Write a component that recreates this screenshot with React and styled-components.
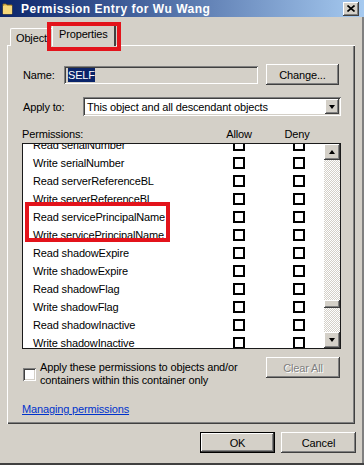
import React from "react";
import styled, { createGlobalStyle } from "styled-components";

const GlobalStyle = createGlobalStyle`
  body {
    margin: 0;
    background: #d4d0c8;
    font-family: "Liberation Sans", Arial, sans-serif;
    font-size: 11px;
    letter-spacing: -0.15px;
    color: #000;
  }
`;

const raised = `
  box-shadow: inset -1px -1px #404040, inset 1px 1px #ffffff,
    inset -2px -2px #808080, inset 2px 2px #d4d0c8;
`;

const sunken = `
  box-shadow: inset 1px 1px #808080, inset -1px -1px #ffffff,
    inset 2px 2px #404040, inset -2px -2px #d4d0c8;
`;

const Window = styled.div`
  width: 364px;
  height: 465px;
  box-sizing: border-box;
  background: #d4d0c8;
  display: flex;
  flex-direction: column;
  border-bottom: 2px solid #404040;
  box-shadow: inset -2px 0 #808080;
  overflow: hidden;
`;

const TitleBar = styled.div`
  height: 17px;
  flex: none;
  display: flex;
  align-items: center;
  padding: 0 5px 0 2px;
  background: linear-gradient(to right, #0a246a, #a6caf0);
`;

const Title = styled.span`
  flex: 1;
  margin-left: 8px;
  color: #fff;
  font-weight: bold;
  font-size: 12px;
  letter-spacing: 0.5px;
  white-space: nowrap;
`;

const CloseButton = styled.div`
  width: 16px;
  height: 14px;
  background: #d4d0c8;
  display: flex;
  align-items: center;
  justify-content: center;
  ${raised}
`;

const TabStrip = styled.div`
  display: flex;
  align-items: flex-end;
  height: 22px;
  margin: 7px 0 -1px 7px;
  padding-left: 3px;
  position: relative;
  z-index: 1;
`;

const Tab = styled.div`
  position: relative;
  box-sizing: border-box;
  height: ${(p) => (p.$active ? 22 : 18)}px;
  width: ${(p) => p.$width}px;
  margin-left: ${(p) => (p.$active ? -2 : 0)}px;
  padding: ${(p) => (p.$active ? "3px 0 0 6px" : "3px 0 0 5px")};
  background: #d4d0c8;
  border-top: 1px solid #fff;
  border-left: 1px solid #fff;
  border-right: 2px solid #404040;
  border-top-left-radius: 2px;
  border-top-right-radius: 2px;
  overflow: hidden;
  white-space: nowrap;
  z-index: ${(p) => (p.$active ? 2 : 1)};
`;

const TabHighlight = styled.div`
  position: absolute;
  left: 40px;
  top: -2px;
  width: 74px;
  height: 29px;
  box-sizing: border-box;
  border: 4px solid #e3131b;
  z-index: 3;
  pointer-events: none;
`;

const Panel = styled.div`
  margin-left: 7px;
  width: 348px;
  height: 379px;
  box-sizing: border-box;
  padding: 19px 0 0 15px;
  box-shadow: inset 1px 1px #ffffff, inset -1px -1px #404040,
    inset -2px -2px #808080;
`;

const FieldRow = styled.div`
  display: flex;
  align-items: center;
  height: ${(p) => p.$height}px;
  margin-top: ${(p) => p.$top || 0}px;
`;

const Label = styled.span`
  width: ${(p) => p.$width}px;
  flex: none;
  padding-left: 1px;
  box-sizing: border-box;
`;

const NameField = styled.div`
  width: 194px;
  height: 18px;
  box-sizing: border-box;
  padding: 3px 0 0 4px;
  background: #d4d0c8;
  ${sunken}
`;

const Selected = styled.span`
  background: #0a246a;
  color: #fff;
  padding: 1px 0;
`;

const Button = styled.div`
  width: ${(p) => p.$width}px;
  height: 21px;
  margin-left: ${(p) => p.$left || 0}px;
  margin-right: ${(p) => p.$right || 0}px;
  box-sizing: border-box;
  display: flex;
  align-items: center;
  justify-content: center;
  background: #d4d0c8;
  color: ${(p) => (p.$disabled ? "#808080" : "#000")};
  text-shadow: ${(p) => (p.$disabled ? "1px 1px #ffffff" : "none")};
  ${raised}
  ${(p) =>
    p.$default &&
    `box-shadow: inset 0 0 0 1px #000, inset -2px -2px #404040,
      inset 2px 2px #ffffff, inset -3px -3px #808080;`}
`;

const Combo = styled.div`
  width: 258px;
  height: 19px;
  box-sizing: border-box;
  padding: 2px 2px 2px 3px;
  display: flex;
  align-items: center;
  background: #fff;
  ${sunken}
`;

const ComboText = styled.span`
  flex: 1;
  padding-left: 1px;
`;

const ArrowButton = styled.div`
  width: ${(p) => p.$width || 16}px;
  height: ${(p) => p.$height || 16}px;
  flex: none;
  display: flex;
  align-items: center;
  justify-content: center;
  background: #d4d0c8;
  ${raised}
`;

const Arrow = styled.span`
  width: 0;
  height: 0;
  border-left: 3.5px solid transparent;
  border-right: 3.5px solid transparent;
  ${(p) =>
    p.$up ? "border-bottom: 4px solid #000;" : "border-top: 4px solid #000;"}
`;

const Header = styled.div`
  display: flex;
  height: 14px;
  margin-top: 11px;
  line-height: 14px;
`;

const HeaderCell = styled.span`
  width: ${(p) => p.$width}px;
  text-align: ${(p) => (p.$center ? "center" : "left")};
`;

const ListBox = styled.div`
  margin-top: 2px;
  width: 319px;
  height: 206px;
  box-sizing: border-box;
  border: 1px solid #1a1a1a;
  background: #fff;
  display: flex;
`;

const Rows = styled.div`
  flex: 1;
  overflow: hidden;
  position: relative;
`;

const RowsInner = styled.div`
  margin-top: -8px;
`;

const Group = styled.div`
  position: relative;
`;

const GroupHighlight = styled.div`
  position: absolute;
  left: 2px;
  top: -6px;
  width: 145px;
  height: 40px;
  box-sizing: border-box;
  border: 4px solid #e3131b;
  pointer-events: none;
`;

const Row = styled.div`
  display: flex;
  align-items: center;
  height: 18px;
  padding-left: 10px;
`;

const RowName = styled.span`
  width: 200px;
  flex: none;
  white-space: nowrap;
`;

const Box = styled.span`
  width: 12px;
  height: 12px;
  box-sizing: border-box;
  border: 2px solid #000;
  background: #fff;
  flex: none;
  margin-right: ${(p) => p.$gap || 0}px;
`;

const ScrollBar = styled.div`
  width: 16px;
  flex: none;
  display: flex;
  flex-direction: column;
`;

const Track = styled.div`
  flex: 1;
  background-color: #fff;
  background-image: conic-gradient(
    #d4d0c8 25%,
    transparent 0 50%,
    #d4d0c8 0 75%,
    transparent 0
  );
  background-size: 2px 2px;
`;

const Thumb = styled.div`
  height: 8px;
  background: #d4d0c8;
  ${raised}
`;

const ApplyRow = styled.div`
  display: flex;
  justify-content: space-between;
  align-items: flex-start;
  width: 319px;
  margin-top: 8px;
`;

const ApplyLeft = styled.div`
  display: flex;
  align-items: center;
  gap: 4px;
  margin-top: 4px;
  line-height: 13px;
`;

const ClassicCheck = styled.span`
  width: 13px;
  height: 13px;
  margin-left: 1px;
  background: #fff;
  flex: none;
  ${sunken}
`;

const Link = styled.a`
  display: block;
  margin-top: 16px;
  line-height: 12px;
  color: #0033cc;
  text-decoration: underline;
  width: max-content;
`;

const ButtonRow = styled.div`
  display: flex;
  justify-content: flex-end;
  gap: 6px;
  margin-top: 8px;
  padding-right: 8px;
`;

const permissions = [
  "Read serialNumber",
  "Write serialNumber",
  "Read serverReferenceBL",
  "Write serverReferenceBL",
  "Read servicePrincipalName",
  "Write servicePrincipalName",
  "Read shadowExpire",
  "Write shadowExpire",
  "Read shadowFlag",
  "Write shadowFlag",
  "Read shadowInactive",
  "Write shadowInactive",
];

const PermissionRow = ({ name }) => (
  <Row>
    <RowName>{name}</RowName>
    <Box $gap={48} />
    <Box />
  </Row>
);

const FolderIcon = () => (
  <svg width="11" height="13" viewBox="0 0 11 13">
    <path d="M1 2h3l1 1h5v9H1z" fill="#e8c15a" stroke="#8a6a1c" strokeWidth="0.8" />
    <path d="M1 4h9v8H1z" fill="#f5d77a" />
  </svg>
);

const App = () => {
  const trackHeight = 172;
  const thumbOffset = Math.round(0.853 * (trackHeight - 8));

  return (
    <>
      <GlobalStyle />
      <Window>
        <TitleBar>
          <FolderIcon />
          <Title>Permission Entry for Wu Wang</Title>
          <CloseButton>
            <svg width="8" height="7" viewBox="0 0 8 7">
              <path d="M0.5 0.5L7.5 6.5M7.5 0.5L0.5 6.5" stroke="#000" strokeWidth="1.6" />
            </svg>
          </CloseButton>
        </TitleBar>

        <TabStrip>
          <Tab $width={44}>Object</Tab>
          <Tab $width={64} $active>
            Properties
          </Tab>
          <TabHighlight />
        </TabStrip>

        <Panel>
          <FieldRow $height={21}>
            <Label $width={42}>Name:</Label>
            <NameField>
              <Selected>SELF</Selected>
            </NameField>
            <Button $width={73} $left={8}>
              Change...
            </Button>
          </FieldRow>

          <FieldRow $height={19} $top={12}>
            <Label $width={61}>Apply to:</Label>
            <Combo>
              <ComboText>This object and all descendant objects</ComboText>
              <ArrowButton $width={14} $height={15}>
                <Arrow />
              </ArrowButton>
            </Combo>
          </FieldRow>

          <Header>
            <HeaderCell $width={192}>Permissions:</HeaderCell>
            <HeaderCell $width={50} $center>
              Allow
            </HeaderCell>
            <HeaderCell $width={66} $center>
              Deny
            </HeaderCell>
          </Header>

          <ListBox>
            <Rows>
              <RowsInner>
                {permissions.slice(0, 4).map((p) => (
                  <PermissionRow key={p} name={p} />
                ))}
                <Group>
                  {permissions.slice(4, 6).map((p) => (
                    <PermissionRow key={p} name={p} />
                  ))}
                  <GroupHighlight />
                </Group>
                {permissions.slice(6).map((p) => (
                  <PermissionRow key={p} name={p} />
                ))}
              </RowsInner>
            </Rows>
            <ScrollBar>
              <ArrowButton>
                <Arrow $up />
              </ArrowButton>
              <Track>
                <Thumb style={{ marginTop: thumbOffset }} />
              </Track>
              <ArrowButton>
                <Arrow />
              </ArrowButton>
            </ScrollBar>
          </ListBox>

          <ApplyRow>
            <ApplyLeft>
              <ClassicCheck />
              <span>
                Apply these permissions to objects and/or
                <br />
                containers within this container only
              </span>
            </ApplyLeft>
            <Button $width={74} $right={1} $disabled>
              Clear All
            </Button>
          </ApplyRow>

          <Link href="#">Managing permissions</Link>
        </Panel>

        <ButtonRow>
          <Button $width={75} $default>
            OK
          </Button>
          <Button $width={75}>Cancel</Button>
        </ButtonRow>
      </Window>
    </>
  );
};

export default App;
